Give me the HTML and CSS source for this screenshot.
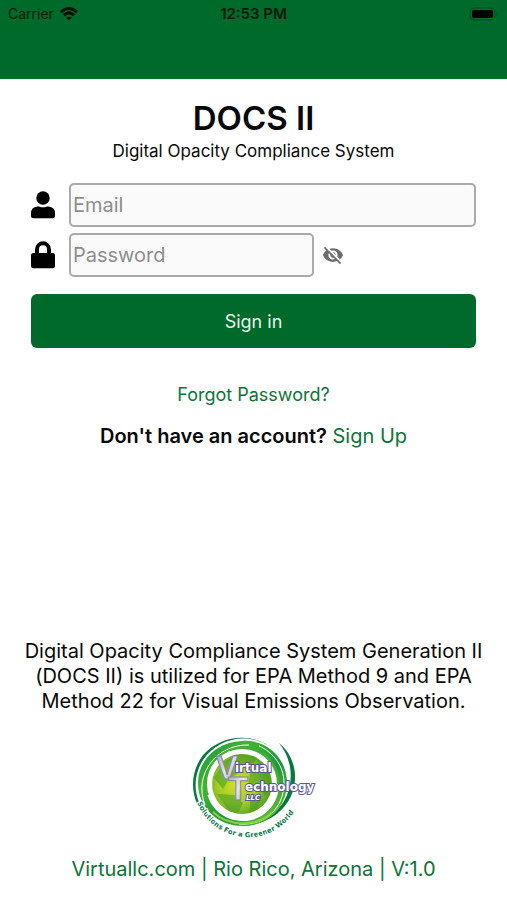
FILE: index.html
```html
<!DOCTYPE html>
<html lang="en">
<head>
<meta charset="utf-8">
<meta name="viewport" content="width=device-width, initial-scale=1">
<title>DOCS II</title>
<link rel="stylesheet" href="styles.css">
</head>
<body>
<header class="topbar">
  <div class="status">
    <div class="carrier">
      <span>Carrier</span>
      <svg class="wifi" viewBox="0 0 18 14" aria-hidden="true">
        <path d="M1 5.2Q9-2.2 17 5.2" />
        <path d="M3.9 8.2Q9 3.6 14.1 8.2" />
        <path class="dot" d="M6.2 10.7Q9 8.6 11.8 10.7L9 13.6Z" />
      </svg>
    </div>
    <time class="clock">12:53 PM</time>
    <svg class="battery" viewBox="0 0 30 14" aria-hidden="true">
      <rect class="shell" x="1" y="1" width="25" height="12" rx="4" />
      <rect x="3" y="3" width="21" height="8" rx="2" />
      <path class="tip" d="M27.5 5Q30 7 27.5 9Z" />
    </svg>
  </div>
</header>
<main class="page">
  <h1 class="title">DOCS II</h1>
  <p class="subtitle">Digital Opacity Compliance System</p>
  <form class="form">
    <div class="field">
      <label for="email" aria-label="Email">
        <svg class="icon" viewBox="0 0 24 28" aria-hidden="true">
          <circle cx="12" cy="7" r="6.7" />
          <path d="M6.5 15.5H8Q12 17.2 16 15.5H17.5Q24 16 24 22.5V25Q24 27.3 21.7 27.3H2.3Q0 27.3 0 25V22.5Q0 16 6.5 15.5Z" />
        </svg>
      </label>
      <input id="email" class="input" type="email" placeholder="Email">
    </div>
    <div class="field">
      <label for="password" aria-label="Password">
        <svg class="icon" viewBox="0 0 24 28" aria-hidden="true">
          <path fill-rule="evenodd" d="M4 12V8.3A8 8 0 0 1 20 8.3V12H21.5Q24 12 24 14.5V24.8Q24 27.3 21.5 27.3H2.5Q0 27.3 0 24.8V14.5Q0 12 2.5 12ZM8 12H16V8.3A4 4 0 0 0 8 8.3Z" />
        </svg>
      </label>
      <input id="password" class="input input-short" type="password" placeholder="Password">
      <button class="reveal" type="button" aria-label="Show password">
        <svg viewBox="0 0 24 24" aria-hidden="true"><path d="M12 7c2.76 0 5 2.24 5 5 0 .65-.13 1.26-.36 1.83l2.92 2.92c1.51-1.26 2.7-2.89 3.43-4.75-1.73-4.39-6-7.5-11-7.5-1.4 0-2.74.25-3.98.7l2.16 2.16C10.74 7.13 11.35 7 12 7zM2 4.27l2.28 2.28.46.46C3.08 8.3 1.78 10.02 1 12c1.73 4.39 6 7.5 11 7.5 1.55 0 3.03-.3 4.38-.84l.42.42L19.73 22 21 20.73 3.27 3 2 4.27zM7.53 9.8l1.55 1.55c-.05.21-.08.43-.08.65 0 1.66 1.34 3 3 3 .22 0 .44-.03.65-.08l1.55 1.55c-.67.33-1.41.53-2.2.53-2.76 0-5-2.24-5-5 0-.79.2-1.53.53-2.2zm4.31-.78l3.15 3.15.02-.16c0-1.66-1.34-3-3-3l-.17.01z" /></svg>
      </button>
    </div>
    <button class="submit" type="submit">Sign in</button>
  </form>
  <a class="link forgot" href="#">Forgot Password?</a>
  <p class="signup"><strong>Don't have an account?</strong> <a class="link" href="#">Sign Up</a></p>
  <footer class="footer">
    <p class="about">Digital Opacity Compliance System Generation II (DOCS II) is utilized for EPA Method 9 and EPA Method 22 for Visual Emissions Observation.</p>
    <svg class="logo" viewBox="0 0 145 115" role="img" aria-label="Virtual Technology LLC">
      <defs>
        <linearGradient id="ring" x1="0" y1="0" x2="1" y2="1">
          <stop offset="0" stop-color="#129043" /><stop offset=".3" stop-color="#43b62f" /><stop offset=".6" stop-color="#1c9440" /><stop offset="1" stop-color="#7fd02c" />
        </linearGradient>
        <radialGradient id="globe" cx=".42" cy=".5" r=".6">
          <stop offset="0" stop-color="#d5e126" /><stop offset=".55" stop-color="#a4cc28" /><stop offset="1" stop-color="#4a9d22" />
        </radialGradient>
        <linearGradient id="metal" x1="0" y1="0" x2="1" y2="1">
          <stop offset="0" stop-color="#9a9cae" /><stop offset=".5" stop-color="#e6e6ee" /><stop offset="1" stop-color="#9295ad" />
        </linearGradient>
        <path id="motto" d="M15 70A54.5 54.5 0 0 0 119 70" />
      </defs>
      <path fill="#087a40" d="M88 17C66 3 37 9 22 31C10 50 13 72 28 90C10 76 6 47 22 26C40 6 69 4 88 17Z" />
      <path fill="#087a40" d="M98 14C118 30 119 60 103 78C92 91 75 97 59 97C82 95 100 82 106 66C113 48 110 29 98 14Z" />
      <path fill="url(#ring)" fill-rule="evenodd" d="M61 12C87 10 106 30 106 54C106 79 86 97 62 97C36 97 17 78 17 54C17 31 36 13 61 12ZM62 19C41 19 25 35 25 55C25 76 41 92 62 92C83 92 98 75 98 55C98 35 83 19 62 19Z" />
      <path class="swoosh" stroke="#fff" stroke-width="1" d="M24 76C12 45 36 15 68 16M58 95C84 97 103 79 103 54C103 37 92 23 78 17" />
      <path class="swoosh" stroke="#8ad03b" stroke-width="2" d="M32 83C47 98 77 98 91 83" />
      <path class="swoosh" stroke="#3fb034" stroke-width="4" d="M27 66C20 42 38 20 62 20C83 20 97 36 97 55" />
      <circle class="swoosh" cx="61" cy="55" r="33" stroke="#fff" stroke-width="4" />
      <circle cx="61" cy="55" r="30" fill="url(#globe)" />
      <path fill="#459b25" opacity=".55" d="M44 32L59 25L76 28L72 36L61 37L56 45L48 50L42 60L33 49ZM79 33L88 45L90 60L84 67L78 58L67 56L69 45ZM36 65L54 66L62 74L57 84L48 82ZM70 67L81 69L75 81L68 84Z" />
      <g class="initial">
        <text x="35" y="50">V</text>
        <text x="47" y="71">T</text>
      </g>
      <g class="letters">
        <text x="54" y="43" font-size="12">irtual</text>
        <text x="64" y="62" font-size="12">echnology</text>
        <text class="llc" x="65" y="71" font-size="7">LLC</text>
      </g>
      <text class="motto"><textPath href="#motto" startOffset="4">Solutions For a Greener World</textPath></text>
    </svg>
    <p class="contact">Virtuallc.com | Rio Rico, Arizona | V:1.0</p>
  </footer>
</main>
</body>
</html>
```
FILE: styles.css
```css
* { box-sizing: border-box; }

body {
  margin: 0;
  min-height: 100vh;
  display: flex;
  flex-direction: column;
  background: #fff;
  color: #080808;
  font-family: Inter, "Liberation Sans", sans-serif;
}

h1, p { margin: 0; }

.topbar {
  height: 79px;
  background: #006a2b;
  color: #001a09;
}

.status {
  display: grid;
  grid-template-columns: 1fr auto 1fr;
  align-items: center;
  height: 27px;
  padding: 0 8px;
  font-size: 14px;
}

.carrier { display: flex; align-items: center; gap: 6px; }
.wifi { width: 18px; height: 14px; fill: none; stroke: #001005; stroke-width: 3; }
.wifi .dot { fill: #001005; stroke: none; }
.clock { font-size: 15px; line-height: 18px; font-weight: 600; }
.battery { width: 30px; height: 14px; justify-self: end; }
.battery .shell { fill: none; stroke: #004a1c; stroke-width: 1; }
.battery .tip { fill: #004a1c; }

.page {
  flex: 1;
  display: flex;
  flex-direction: column;
  align-items: center;
  padding: 19px 31px 18px;
  text-align: center;
}

.title { font-size: 33px; line-height: 40px; font-weight: 600; }
.subtitle { margin-top: 1px; font-size: 17px; line-height: 24px; }

.form {
  align-self: stretch;
  display: flex;
  flex-direction: column;
  gap: 6px;
  margin-top: 20px;
}

.field { display: flex; align-items: center; gap: 8px; }
.field label { display: flex; width: 30px; }
.icon { width: 24px; height: 28px; fill: #000; }

.input {
  flex: 1;
  min-width: 0;
  height: 44px;
  padding: 0 2px;
  border: 2px solid #aaa;
  border-radius: 5px;
  background: #fafafa;
  color: #080808;
  font: 20px Inter, "Liberation Sans", sans-serif;
}
.input::placeholder { color: #8e8e8e; opacity: 1; }
.input-short { flex: 0 1 60%; max-width: 55%; }

.reveal {
  padding: 0;
  border: 0;
  background: none;
  line-height: 0;
}
.reveal svg { width: 22px; height: 22px; fill: #6d6d6d; }

.submit {
  height: 54px;
  margin-top: 11px;
  border: 0;
  border-radius: 6px;
  background: #006a2b;
  color: #e9f5ec;
  font: 18px Inter, "Liberation Sans", sans-serif;
}

.link { color: #0b7437; text-decoration: none; }
.forgot { margin-top: 35px; font-size: 18px; line-height: 24px; }
.signup { margin-top: 16px; font-size: 20px; line-height: 26px; }
.signup strong { font-weight: 600; }

.footer {
  display: flex;
  flex-direction: column;
  align-items: center;
  margin: auto -8px 0;
}
.about { font-size: 20px; line-height: 25px; }
.logo { width: 145px; height: 115px; margin-top: 15px; }
.contact { margin-top: 12px; color: #0b7437; font-size: 20px; line-height: 26px; }

.swoosh { fill: none; }
.letters { font-family: "DejaVu Sans", sans-serif; font-weight: 700; fill: #fff; stroke: #5a569c; stroke-width: 2; paint-order: stroke; }
.llc { font-style: italic; }
.initial { fill: url(#metal); stroke: #85869f; stroke-width: 1; font: 700 33px "Liberation Sans", sans-serif; }
.motto { fill: #087a4a; stroke: #fff; stroke-width: 2; paint-order: stroke; font: 700 7px "DejaVu Sans", sans-serif; }
```
